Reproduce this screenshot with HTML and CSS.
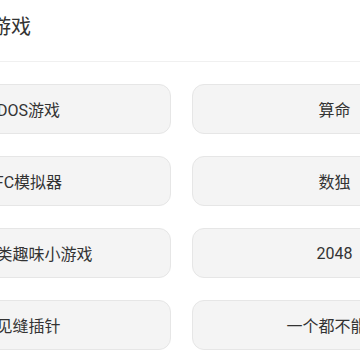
FILE: index.html
```html
<!DOCTYPE html>
<html lang="zh-CN">
<head>
<meta charset="utf-8">
<title>游戏</title>
<link rel="stylesheet" href="styles.css">
</head>
<body>
<div class="page">
  <header class="header">
    <h1 class="title">游戏</h1>
  </header>
  <main class="grid">
    <div class="card">DOS游戏</div>
    <div class="card">算命</div>
    <div class="card">FC模拟器</div>
    <div class="card">数独</div>
    <div class="card">益智类趣味小游戏</div>
    <div class="card">2048</div>
    <div class="card">见缝插针</div>
    <div class="card">一个都不能少</div>
  </main>
</div>
</body>
</html>
```
FILE: styles.css
```css
html, body {
  margin: 0;
  padding: 0;
  background: #ffffff;
  overflow: hidden;
}
body {
  font-family: Roboto, "Noto Sans CJK SC", sans-serif;
  color: #333333;
}
.page {
  width: 360px;
}
.header {
  box-sizing: border-box;
  height: 62px;
  padding-top: 13px;
  border-bottom: 1px solid #f0f0f0;
  display: flex;
  align-items: flex-start;
}
.title {
  margin: 0 0 0 -9px;
  font-size: 20px;
  font-weight: 400;
  line-height: 28px;
  color: #333333;
  white-space: nowrap;
}
.grid {
  display: grid;
  grid-template-columns: 285px 285px;
  column-gap: 21px;
  row-gap: 22px;
  margin-left: -114px;
  width: 591px;
  padding-top: 22px;
}
.card {
  box-sizing: border-box;
  height: 50px;
  border: 1px solid #e6e6e6;
  border-radius: 12px;
  background: #f4f4f4;
  display: flex;
  align-items: center;
  justify-content: center;
  font-size: 16px;
  color: #333333;
  white-space: nowrap;
}
```
